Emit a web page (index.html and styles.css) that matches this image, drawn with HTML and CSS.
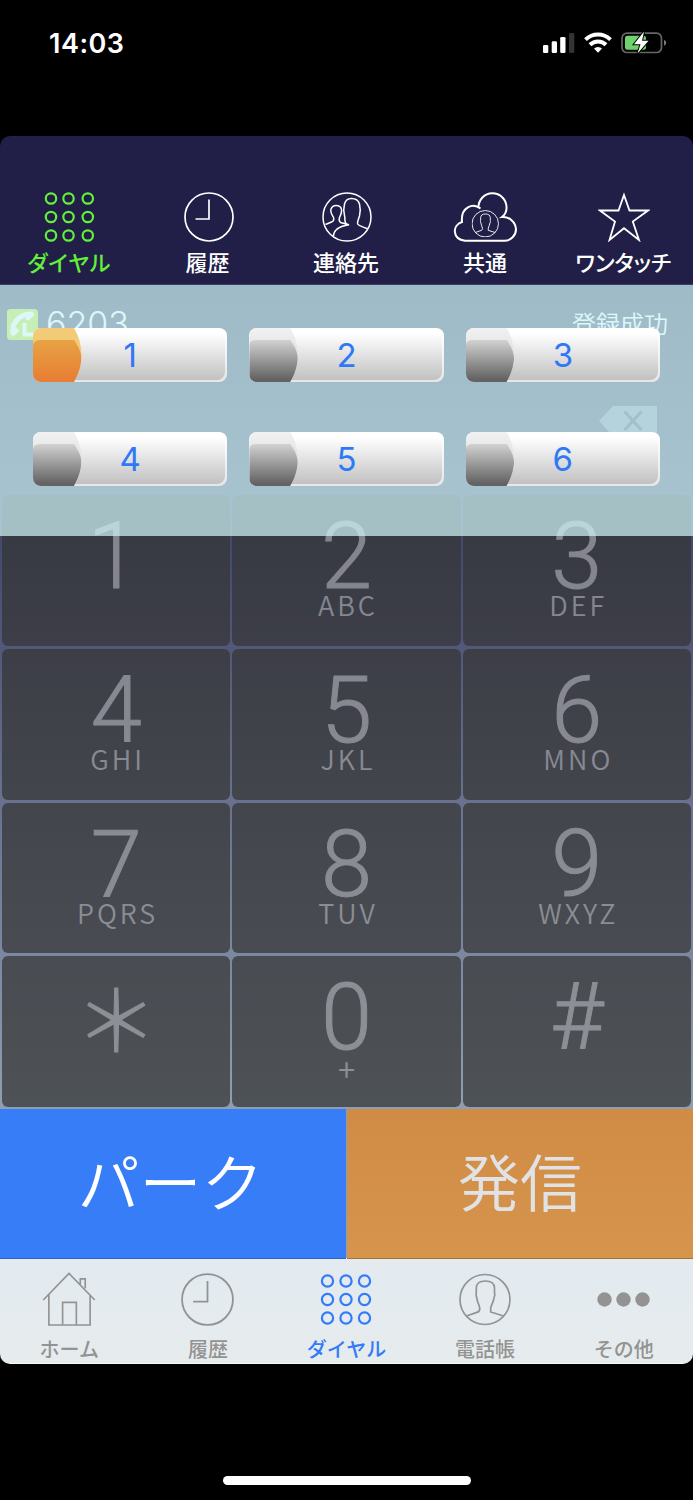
FILE: index.html
```html
<!DOCTYPE html>
<html lang="ja">
<head>
    <meta charset="UTF-8">
    <meta name="viewport" content="width=device-width, initial-scale=1.0">
    <title>ダイヤル</title>
    <link rel="stylesheet" href="styles.css">
</head>
<body>
    <!-- shared icon shapes -->
    <svg class="defs" width="0" height="0">
        <symbol id="dots" viewBox="0 0 50 50">
            <g fill="none" stroke="currentColor" stroke-width="2.2">
                <circle cx="6.5" cy="6.5" r="5.2"/><circle cx="24" cy="6.5" r="5.2"/><circle cx="43.3" cy="6.5" r="5.2"/>
                <circle cx="6.5" cy="25" r="5.2"/><circle cx="24" cy="25" r="5.2"/><circle cx="43.3" cy="25" r="5.2"/>
                <circle cx="6.5" cy="43.5" r="5.2"/><circle cx="24" cy="43.5" r="5.2"/><circle cx="43.3" cy="43.5" r="5.2"/>
            </g>
        </symbol>
        <symbol id="clock" viewBox="0 0 50 50">
            <g fill="none" stroke="currentColor" stroke-width="1.7">
                <circle cx="25" cy="25" r="24"/>
                <path d="M25 7.5v19.5H11.5"/>
            </g>
        </symbol>
        <symbol id="person" viewBox="0 0 52 52">
            <g fill="none" stroke="currentColor" stroke-width="1.7">
                <circle cx="26" cy="26" r="25"/>
                <path d="M7.5 42.5L18.5 38.6Q21 38 20.7 34.5C20.5 31.5 18 28.5 17.8 24.5C16.5 22 17 20 17.3 19V14.5C17.3 10 20.5 7.5 26.2 7.5S35.5 10 35.5 14.5V19C36 20.5 36.2 22.5 35 24.5C34.7 28.5 32 31.5 31.7 34.5V38.5L44.5 42.5"/>
            </g>
        </symbol>
    </svg>

    <div class="status-bar">
        <span class="time">14:03</span>
        <svg class="status-icons" width="126" height="24" viewBox="0 0 126 24">
            <g fill="#fff">
                <rect x="1" y="14" width="5.3" height="8" rx="1.3"/>
                <rect x="9.7" y="10.3" width="5.3" height="11.7" rx="1.3"/>
                <rect x="18.2" y="6" width="5.3" height="16" rx="1.3"/>
                <rect x="27" y="2" width="5.3" height="20" rx="1.3" fill="#333"/>
                <path d="M52 17.5a6 6 0 0 1 8 0l-4 4.3z"/>
            </g>
            <g fill="none" stroke="#fff" stroke-width="4">
                <path d="M43.5 8.6a18 18 0 0 1 25 0"/>
                <path d="M48 13.8a11.5 11.5 0 0 1 16 0"/>
            </g>
            <rect x="80" y="2.2" width="39.5" height="19.3" rx="5" fill="none" stroke="#666" stroke-width="1.7"/>
            <path d="M122 8.8q2.3 1.2 2.3 3t-2.3 3z" fill="#777"/>
            <rect x="83" y="4.8" width="21" height="14" rx="2.5" fill="#6dd46d"/>
            <path d="M102 .5L92 13.3h6.5L95.5 22.5 106.5 9.7h-6.5z" fill="#fff" stroke="#000" stroke-width="2" paint-order="stroke"/>
        </svg>
    </div>

    <div class="app">
        <nav class="top-nav">
            <div class="nav-item active">
                <svg width="51" height="50"><use href="#dots"/></svg>
                <span class="wide">ダイヤル</span>
            </div>
            <div class="nav-item">
                <svg class="nudge" width="50" height="50"><use href="#clock"/></svg>
                <span>履歴</span>
            </div>
            <div class="nav-item">
                <svg class="nudge" width="50" height="50" viewBox="0 0 50 50" fill="none" stroke="currentColor" stroke-width="1.5">
                    <circle cx="25" cy="25" r="24"/>
                    <path d="M24.5 32C22 30.5 23.5 27 22.5 23.5C21.5 20 21.5 16 22.5 12C23.5 8 26 6.5 29.5 6.5S36.5 8.5 37.5 12C38.5 16 38.5 20 37.5 24C36.5 27 35.5 28.5 35.5 31.5Q35 33 45.5 36.8"/>
                    <path d="M3.5 32.5L9.5 30Q12.5 29 11.5 25.5C9.5 22 8 20 9 17C10 14.5 11.5 13.5 14 13.5S19 14.5 19.5 17.5C20 20.5 19 22.5 17.5 25.5Q16.5 29 18.5 30.5L27 32.8Q12 35 11.5 44"/>
                </svg>
                <span>連絡先</span>
            </div>
            <div class="nav-item">
                <svg width="64" height="50" viewBox="0 0 64 50" fill="none" stroke="currentColor" stroke-width="2">
                    <path d="M27.5 16.5C20 10.5 7.5 15 9 30C-1 33 -1 47 12 48.7H51.5A11.5 11.5 0 0 0 63 37.2A13 13 0 0 0 49 25C53 22 53.8 19 53.5 15A14 14 0 0 0 25.5 15.5"/>
                    <svg x="18.5" y="18" width="27.5" height="27.5"><use href="#person"/></svg>
                </svg>
                <span class="right">共通</span>
            </div>
            <div class="nav-item">
                <svg width="52" height="50" viewBox="0 0 52 50" fill="none" stroke="currentColor" stroke-width="1.8">
                    <path d="M26 3L31.5 18.5H50L34.8 29.5L41 48L26 36.2L11.5 48L17 29.5L2 18.5H20.5z"/>
                </svg>
                <span>ワンタッチ</span>
            </div>
        </nav>

        <main class="content">
            <section class="display">
                <div class="line">
                    <svg width="31" height="31" viewBox="0 0 31 31">
                        <rect width="31" height="31" rx="3.5" fill="#a8e10a"/>
                        <path d="M6.5 23.5C4 16 11 5.5 23.5 5" fill="none" stroke="#fff" stroke-width="5"/>
                        <path d="M20.5 4L25.5 3l1.5 3-5 5-3-1zM4 21l5.5-2 2.5 3-5.5 5-2.5-2z" fill="#fff" stroke="#fff" stroke-linejoin="round"/>
                        <path d="M17.5 14v11.5H27" fill="none" stroke="#fff" stroke-width="4"/>
                    </svg>
                    <span class="number">6203</span>
                    <span class="state">登録成功</span>
                </div>
                <svg class="backspace" width="58" height="30" viewBox="0 0 58 30">
                    <path d="M0 15L14 0H58V30H14z" fill="#6e7d99"/>
                    <path d="M25.5 5.5l17 18.5M42.5 5.5l-17 18.5" stroke="#31385f" stroke-width="3"/>
                </svg>
            </section>

            <section class="keypad">
                <div class="key"><b class="one">1</b></div>
                <div class="key"><b>2</b><i>ABC</i></div>
                <div class="key"><b>3</b><i>DEF</i></div>
                <div class="key"><b>4</b><i>GHI</i></div>
                <div class="key"><b>5</b><i>JKL</i></div>
                <div class="key"><b>6</b><i>MNO</i></div>
                <div class="key"><b>7</b><i>PQRS</i></div>
                <div class="key"><b>8</b><i>TUV</i></div>
                <div class="key"><b>9</b><i>WXYZ</i></div>
                <div class="key"><b class="star">&#xFF0A;</b></div>
                <div class="key"><b>0</b><i class="plus">+</i></div>
                <div class="key"><b>#</b></div>
            </section>

            <section class="actions">
                <button class="park">パーク</button>
                <button class="call">発信</button>
            </section>

            <!-- park slots shown over the dial pad -->
            <div class="park-panel">
                <button class="slot used"><span class="lamp"></span>1</button>
                <button class="slot"><span class="lamp"></span>2</button>
                <button class="slot"><span class="lamp"></span>3</button>
                <button class="slot"><span class="lamp"></span>4</button>
                <button class="slot"><span class="lamp"></span>5</button>
                <button class="slot"><span class="lamp"></span>6</button>
            </div>
        </main>

        <nav class="tab-bar">
            <div class="tab">
                <svg width="54" height="56" viewBox="0 0 54 56" fill="none" stroke="currentColor" stroke-width="1.7">
                    <path d="M.8 28.5L27 1.5l26.2 27M6.5 23v31h42V23M20.5 54V31h14v23M38.5 12.5V7h5v9.5"/>
                </svg>
                <span>ホーム</span>
            </div>
            <div class="tab">
                <svg width="53" height="53"><use href="#clock"/></svg>
                <span>履歴</span>
            </div>
            <div class="tab active">
                <svg width="52" height="52" viewBox="0 0 52 52" fill="none" stroke="currentColor" stroke-width="2.2">
                    <circle cx="7.5" cy="7.5" r="5.6"/><circle cx="26" cy="7.5" r="5.6"/><circle cx="44.5" cy="7.5" r="5.6"/>
                    <circle cx="7.5" cy="26" r="5.6"/><circle cx="26" cy="26" r="5.6"/><circle cx="44.5" cy="26" r="5.6"/>
                    <circle cx="7.5" cy="44.5" r="5.6"/><circle cx="26" cy="44.5" r="5.6"/><circle cx="44.5" cy="44.5" r="5.6"/>
                </svg>
                <span>ダイヤル</span>
            </div>
            <div class="tab">
                <svg width="52" height="52"><use href="#person"/></svg>
                <span>電話帳</span>
            </div>
            <div class="tab">
                <svg width="54" height="52" viewBox="0 0 54 52" fill="currentColor">
                    <circle cx="7.5" cy="26" r="7.2"/><circle cx="26.5" cy="26" r="7.2"/><circle cx="45.5" cy="26" r="7.2"/>
                </svg>
                <span>その他</span>
            </div>
        </nav>
    </div>

    <div class="home-indicator"></div>
</body>
</html>
```
FILE: styles.css
```css
* {
    box-sizing: border-box;
}

body {
    margin: 0;
    height: 1500px;
    background-color: #000;
    font-family: 'Inter', 'Noto Sans CJK JP', sans-serif;
    color: #fff;
    overflow: hidden;
}

.defs {
    position: absolute;
}

svg {
    display: block;
    flex: none;
}

button {
    border: 0;
    padding: 0;
    margin: 0;
    font-family: inherit;
}

.status-bar {
    display: flex;
    justify-content: space-between;
    align-items: flex-start;
    height: 136px;
    padding: 31px 25px 0 49px;
}

.time {
    font-size: 27px;
    line-height: 25px;
    font-weight: 600;
    letter-spacing: 0.5px;
}

.app {
    height: 1228px;
    border-radius: 10px;
    overflow: hidden;
}

.top-nav {
    display: grid;
    grid-template-columns: repeat(5, 1fr);
    height: 149px;
    padding-top: 56px;
    background-color: #211f47;
    border-bottom: 1px solid #3d3c66;
}

.nav-item,
.tab {
    display: flex;
    flex-direction: column;
    align-items: center;
    font-family: 'Noto Sans CJK JP', sans-serif;
    font-weight: 500;
    white-space: nowrap;
}

.nav-item {
    font-size: 22px;
    line-height: 32px;
    gap: 3px;
    font-feature-settings: 'palt';
}

.nav-item.active {
    color: #62f03a;
}

.nav-item .wide {
    letter-spacing: 1px;
    margin-right: 0;
}

.nav-item span {
    margin-right: 1px;
}

.nav-item .right {
    margin-right: 0;
}

.nudge {
    margin-left: 2px;
}

.content {
    position: relative;
    height: 973px;
    background: linear-gradient(#24284f 0%, #3c4368 21%, #53587b 37%, #69718f 53%, #8f9fb1 85%);
}

.display {
    height: 209px;
    padding: 24px 25px 0 7px;
}

.line {
    display: flex;
    height: 97px;
    align-items: flex-start;
}

.number {
    margin-left: 8px;
    font-size: 34px;
    line-height: 30px;
    font-weight: 350;
}

.state {
    margin-left: auto;
    font-family: 'Noto Sans CJK JP', sans-serif;
    font-size: 24px;
    line-height: 27px;
    font-weight: 350;
}

.backspace {
    margin: 0 11px 0 auto;
}

.keypad {
    display: grid;
    grid-template-columns: repeat(3, 1fr);
    grid-template-rows: repeat(4, 1fr);
    gap: 3px 2px;
    height: 615px;
    padding: 1px 2px 2px;
}

.key {
    display: flex;
    flex-direction: column;
    align-items: center;
    padding-top: 22px;
    border-radius: 6px;
    background-color: rgba(52, 53, 51, 0.72);
    color: #cecfd8;
}

.key b,
.key i {
    opacity: 0.5;
}

.key b {
    height: 76px;
    font-family: 'Roboto', sans-serif;
    font-size: 92px;
    line-height: 80px;
    font-weight: 300;
    -webkit-text-stroke: 1px #cecfd8;
}

.key .one {
    margin-right: 6px;
}

.key .star {
    font-family: 'Noto Sans CJK JP', sans-serif;
    font-size: 84px;
    line-height: 76px;
}

.key i {
    height: 24px;
    font-family: 'Noto Sans CJK JP', sans-serif;
    font-size: 27px;
    line-height: 24px;
    font-style: normal;
    font-weight: 350;
    letter-spacing: 3px;
    margin-right: -3px;
}

.key .plus {
    font-size: 31px;
    margin-top: 2px;
}

.actions {
    display: grid;
    grid-template-columns: 1fr 1fr;
    gap: 1px;
    height: 149px;
}

.park,
.call {
    font-family: 'Noto Sans CJK JP', sans-serif;
    font-size: 62px;
    font-weight: 350;
    line-height: 143px;
    padding-bottom: 6px;
    border-bottom: 1px solid rgba(0, 0, 0, 0.2);
}

.park {
    padding-right: 5px;
    background-color: #377df7;
    color: #fff;
}

.call {
    background: linear-gradient(#d08c45, #d7944c);
    color: #e0e2e6;
}

.park-panel {
    position: absolute;
    top: 0;
    left: 0;
    width: 100%;
    height: 251px;
    display: grid;
    grid-template-columns: repeat(3, 1fr);
    grid-template-rows: 54px 54px;
    gap: 50px 22px;
    padding: 43px 33px 0;
    background-color: rgba(208, 244, 246, 0.72);
}

.slot {
    position: relative;
    border-radius: 8px;
    overflow: hidden;
    background: linear-gradient(#fff 10%, #c2c2c2 95%);
    box-shadow: inset -2px -2px 0 rgba(255, 255, 255, 0.6);
    color: #2f79f6;
    font-size: 33px;
    line-height: 55px;
}

/* curved cap on the left end of a slot */
.lamp,
.lamp::after {
    position: absolute;
    left: 0;
    width: 49px;
    height: 54px;
    clip-path: path('M0 0H41C51 17 51 37 41 54H0Z');
}

.lamp {
    top: 0;
    background: linear-gradient(#f2f2f2, #dcdcdc 60%);
}

.lamp::after {
    content: '';
    top: 0;
    clip-path: path('M0 18Q0 12 7 12H41C51 26 51 37 41 54H0Z');
    background: linear-gradient(#d2d2d2 22%, #636363 95%);
}

.used .lamp {
    background: #f3cb76;
}

.used .lamp::after {
    background: linear-gradient(#e8a344 22%, #e77f34 95%);
}

.tab-bar {
    display: grid;
    grid-template-columns: repeat(5, 1fr);
    height: 106px;
    background: linear-gradient(#e3eaf0, #e6eced);
    border-top: 1px solid #f4f7f8;
    border-bottom: 1px solid #f8fafa;
}

.tab {
    gap: 7px;
    padding-top: 13px;
    font-size: 20px;
    line-height: 30px;
    color: #939393;
}

.tab svg {
    height: 55px;
}

.tab.active {
    color: #337bf7;
}

.home-indicator {
    width: 248px;
    height: 9px;
    margin: 112px auto 0;
    border-radius: 5px;
    background-color: #fff;
}
```
